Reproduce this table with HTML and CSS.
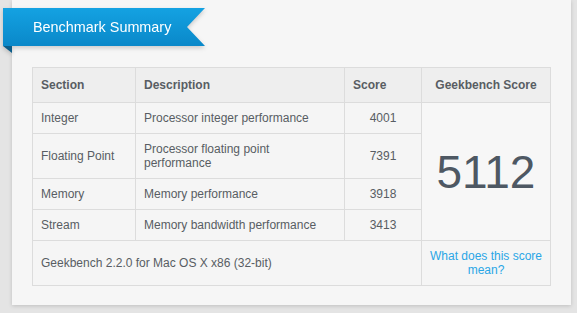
FILE: index.html
```html
<!DOCTYPE html>
<html>
<head>
<meta charset="utf-8">
<link rel="stylesheet" href="styles.css">
</head>
<body>
<div class="card">
  <div class="ribbon">
    <div class="ribbon-body">Benchmark Summary</div>
  </div>
  <table class="summary">
    <colgroup>
      <col class="c1"><col class="c2"><col class="c3"><col class="c4">
    </colgroup>
    <thead>
      <tr class="head">
        <th>Section</th>
        <th>Description</th>
        <th>Score</th>
        <th class="center">Geekbench Score</th>
      </tr>
    </thead>
    <tbody>
      <tr class="r31">
        <td>Integer</td>
        <td>Processor integer performance</td>
        <td class="center">4001</td>
        <td class="total" rowspan="4">5112</td>
      </tr>
      <tr class="r45">
        <td>Floating Point</td>
        <td>Processor floating point performance</td>
        <td class="center">7391</td>
      </tr>
      <tr class="r31">
        <td>Memory</td>
        <td>Memory performance</td>
        <td class="center">3918</td>
      </tr>
      <tr class="r31">
        <td>Stream</td>
        <td>Memory bandwidth performance</td>
        <td class="center">3413</td>
      </tr>
      <tr class="r45">
        <td colspan="3">Geekbench 2.2.0 for Mac OS X x86 (32-bit)</td>
        <td class="center link-cell"><a class="link" href="#">What does this score mean?</a></td>
      </tr>
    </tbody>
  </table>
</div>
</body>
</html>
```

FILE: styles.css
```css
html, body {
  margin: 0;
  padding: 0;
}
body {
  background: #e4e4e4;
  font-family: "Liberation Sans", Arial, sans-serif;
  width: 577px;
  height: 313px;
  overflow: hidden;
}
.card {
  margin-left: 12px;
  width: 559px;
  height: 305px;
  box-sizing: border-box;
  padding: 8px 21px 0 20px;
  background: #f6f6f6;
  box-shadow: 0 1px 4px rgba(0, 0, 0, 0.16);
}
.ribbon {
  position: relative;
  margin-left: -29px;
  width: 202px;
  height: 38px;
  filter: drop-shadow(0 2px 2px rgba(0, 0, 0, 0.18));
}
.ribbon::after {
  content: "";
  position: absolute;
  left: 0;
  top: 38px;
  width: 9px;
  height: 7px;
  background: #0b5d8a;
  clip-path: polygon(0 0, 100% 0, 100% 100%);
}
.ribbon-body {
  height: 38px;
  box-sizing: border-box;
  padding-left: 30px;
  line-height: 38px;
  color: #fff;
  font-size: 14.4px;
  background: linear-gradient(#14a2e2, #0a88c9);
  clip-path: polygon(0 0, 100% 0, calc(100% - 18px) 50%, 100% 100%, 0 100%);
}
.summary {
  margin-top: 21px;
  width: 519px;
  table-layout: fixed;
  border-collapse: separate;
  border-spacing: 0;
  border-top: 1px solid #dcdcdc;
  border-left: 1px solid #dcdcdc;
  font-size: 12px;
  color: #585d63;
}
.c1 { width: 103px; }
.c2 { width: 209px; }
.c3 { width: 77px; }
.c4 { width: 129px; }
.summary th,
.summary td {
  box-sizing: border-box;
  border-right: 1px solid #dcdcdc;
  border-bottom: 1px solid #dcdcdc;
  padding: 0 8px;
  text-align: left;
  vertical-align: middle;
  line-height: 14px;
  background: #f5f5f5;
}
.summary th {
  background: #eeeeee;
  font-weight: bold;
}
.head { height: 35px; }
.r31 { height: 31px; }
.r45 { height: 45px; }
.summary .center { text-align: center; }
.summary .total {
  text-align: center;
  font-size: 46px;
  line-height: 46px;
  color: #4e5863;
  background: #f7f7f7;
  padding: 0;
}
.summary .link-cell {
  padding: 0 4px;
}
.link {
  color: #2aa6e6;
  text-decoration: none;
}
```
